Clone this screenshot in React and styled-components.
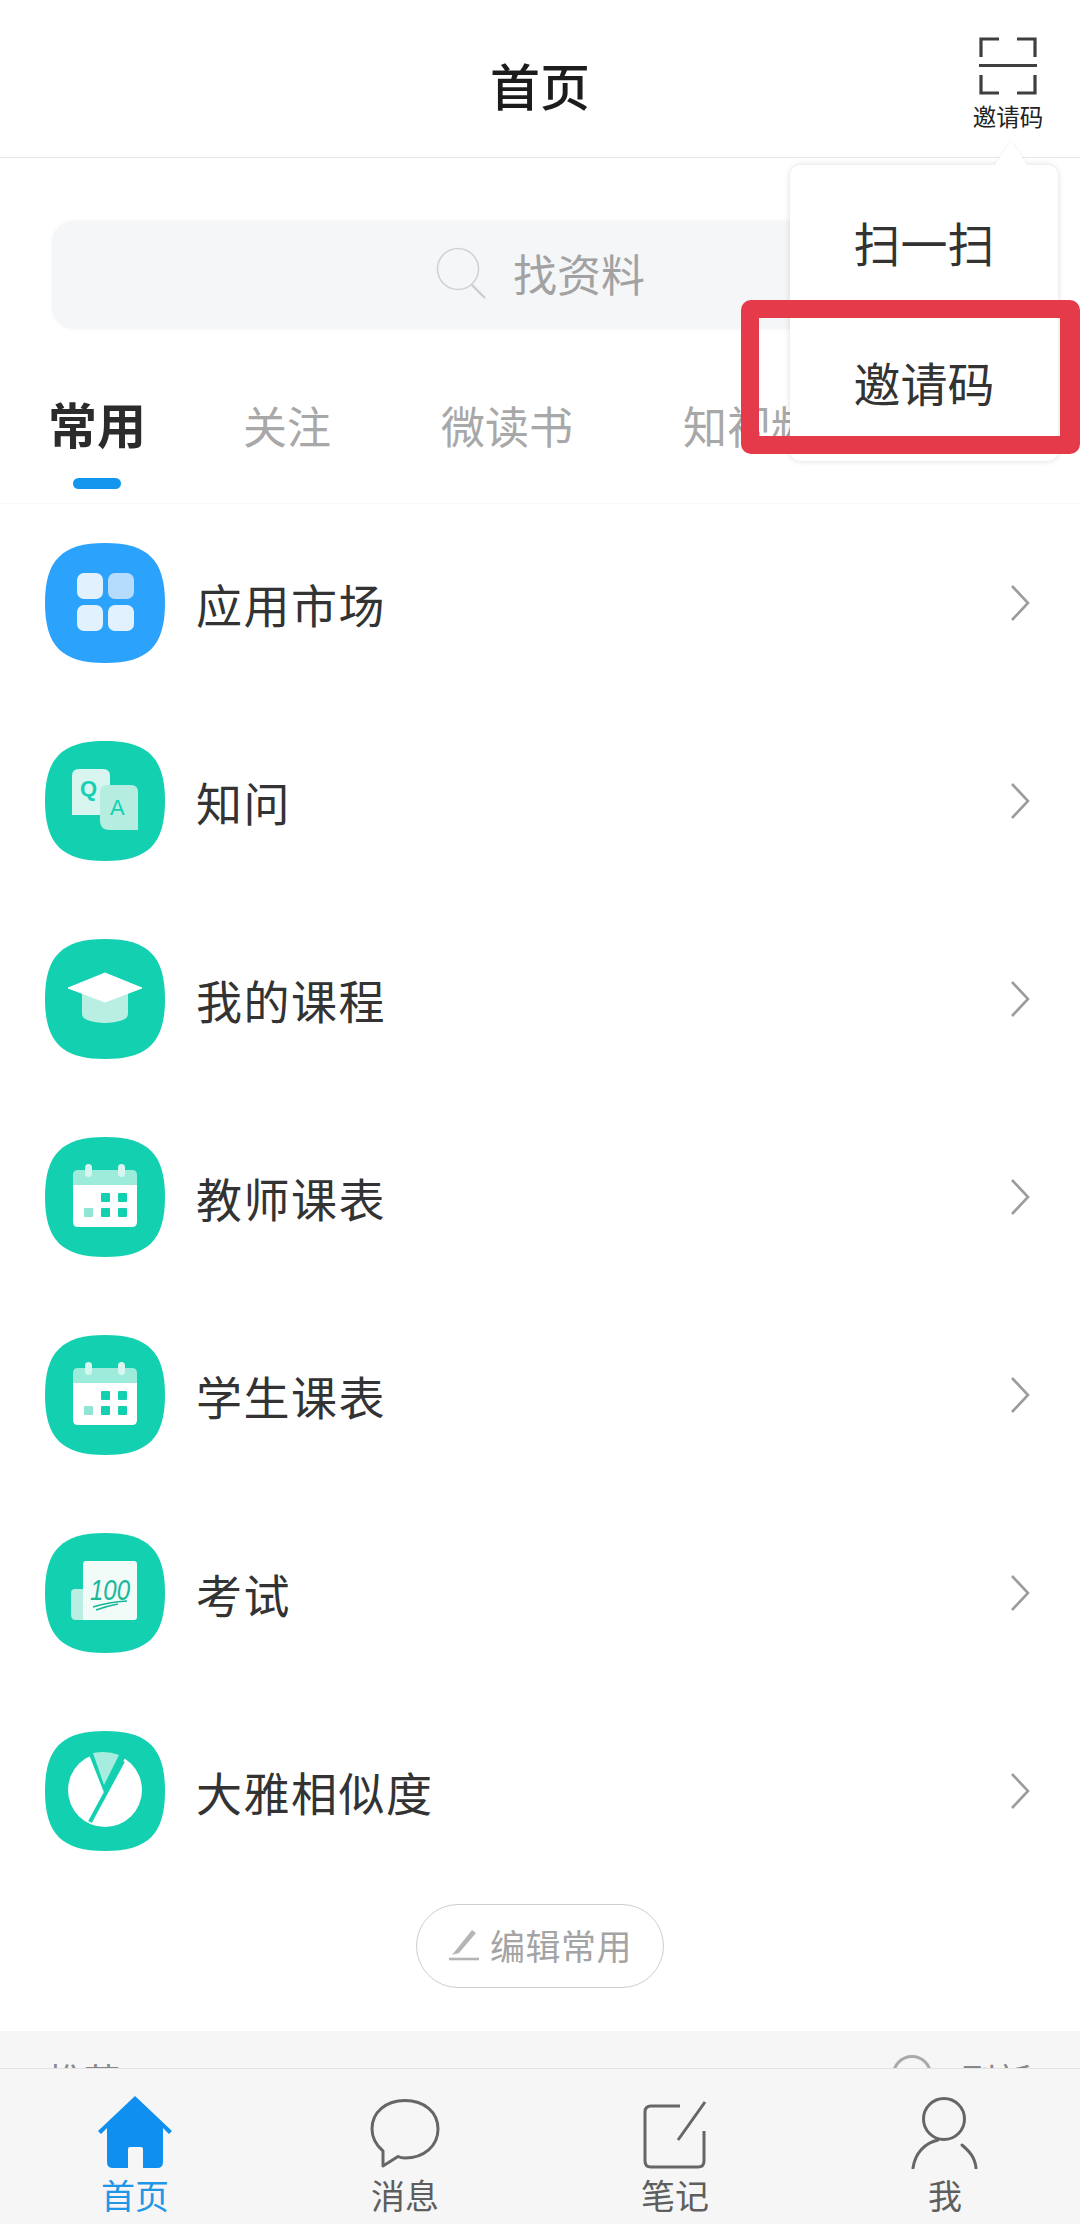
import React from "react";
import styled, { createGlobalStyle } from "styled-components";

const FONT = `"Noto Sans CJK SC", "Noto Sans", sans-serif`;
const TEAL = "#13d0b0";
const MINT = "#b9efe3";

const Global = createGlobalStyle`
  html, body { margin: 0; padding: 0; background: #fff; }
  * { box-sizing: border-box; }
  #root { width: 1080px; height: 2224px; }
`;

const Page = styled.div`
  position: relative;
  width: 1080px;
  height: 2224px;
  display: flex;
  flex-direction: column;
  overflow: hidden;
  background: #fff;
  font-family: ${FONT};
  color: #333;
`;
const Content = styled.main`
  flex: 1;
  min-height: 0;
  overflow: hidden;
  display: flex;
  flex-direction: column;
  background: #fff;
`;
const Header = styled.header`
  height: 158px;
  flex: none;
  display: grid;
  grid-template-columns: 1fr auto 1fr;
  align-items: start;
  padding: 0 37px;
  border-bottom: 1.5px solid #e6e6e6;
`;
const Title = styled.h1`
  grid-column: 2;
  margin: 50px 0 0;
  font-size: 50px;
  line-height: 68px;
  font-weight: 500;
  color: #1c1c1c;
`;
const Invite = styled.div`
  grid-column: 3;
  justify-self: end;
  width: 70px;
  padding-top: 37px;
  display: flex;
  flex-direction: column;
  align-items: center;
`;
const InviteLabel = styled.span`
  margin-top: 6px;
  font-size: 23.5px;
  line-height: 30px;
  white-space: nowrap;
  color: #222;
`;
const SearchBar = styled.div`
  flex: none;
  height: 108px;
  margin: 63px 52px 0;
  padding-bottom: 4px;
  border-radius: 22px;
  background: #f5f6f8;
  box-shadow: 0 0 5px #f5f6f8;
  display: flex;
  align-items: center;
  justify-content: center;
  gap: 26px;
`;
const SearchText = styled.span`
  font-size: 44px;
  line-height: 60px;
  color: #a2a2a2;
`;
const Tabs = styled.nav`
  flex: none;
  height: 111px;
  margin-top: 64px;
  padding-left: 48px;
  display: flex;
  align-items: flex-start;
  gap: 110px;
  overflow: hidden;
  border-bottom: 1px solid #fafafa;
`;
const Tab = styled.div`
  flex: none;
  display: flex;
  flex-direction: column;
  align-items: center;
  margin-top: ${(p) => (p.$active ? "-2px" : "0")};
  margin-right: ${(p) => (p.$active ? "-13px" : "0")};
  font-size: ${(p) => (p.$active ? "49px" : "44px")};
  font-weight: ${(p) => (p.$active ? 700 : 400)};
  line-height: 64px;
  color: ${(p) => (p.$active ? "#2b2b2b" : "#a8a8a8")};
  white-space: nowrap;
`;
const TabBar = styled.i`
  display: block;
  width: 48px;
  height: 11px;
  margin-top: 23px;
  border-radius: 6px;
  background: #1296ee;
`;
const List = styled.ul`
  flex: none;
  margin: 0;
  padding: 0;
  list-style: none;
`;
const Row = styled.li`
  height: 198px;
  padding: 0 50px 0 45px;
  display: flex;
  align-items: center;
  gap: 31px;
`;
const RowLabel = styled.span`
  flex: 1;
  font-size: 46px;
  line-height: 60px;
  letter-spacing: 1.5px;
  color: #333;
`;
const EditButton = styled.div`
  flex: none;
  align-self: center;
  width: 248px;
  height: 84px;
  margin-top: 14px;
  padding-bottom: 3px;
  border: 1.5px solid #cfcfcf;
  border-radius: 42px;
  display: flex;
  align-items: center;
  justify-content: center;
  gap: 10px;
  font-size: 35px;
  letter-spacing: 0.5px;
  color: #a4a4a4;
`;
const Section = styled.section`
  flex: 1;
  margin-top: 43px;
  padding: 24px 48px 0;
  background: #f6f6f6;
  display: flex;
  justify-content: space-between;
  align-items: flex-start;
  font-size: 36px;
  line-height: 48px;
  color: #888;
`;
const Refresh = styled.div`
  display: flex;
  align-items: flex-start;
  gap: 28px;
`;
const Spinner = styled.i`
  display: block;
  width: 40px;
  height: 40px;
  border: 3px solid #aaa;
  border-radius: 50%;
`;
const BottomNav = styled.footer`
  flex: none;
  height: 156px;
  display: grid;
  grid-template-columns: repeat(4, 270px);
  background: #f6f6f6;
  border-top: 1.5px solid #e4e4e4;
`;
const NavItem = styled.div`
  display: flex;
  flex-direction: column;
  align-items: center;
  padding-top: 26px;
  font-size: 34px;
  line-height: 44px;
  color: ${(p) => (p.$active ? "#1f96e6" : "#5e5e5e")};
`;
const NavIcon = styled.div`
  height: 74px;
  margin-bottom: 4px;
  display: flex;
  align-items: flex-end;
`;
const Popup = styled.div`
  position: absolute;
  left: 790px;
  top: 165px;
  width: 268px;
  height: 296px;
  padding-top: 6px;
  background: #fff;
  border-radius: 10px;
  box-shadow: 0 0 6px rgba(0, 0, 0, 0.14);
  &::before {
    content: "";
    position: absolute;
    top: -24px;
    left: 204px;
    border-left: 17px solid transparent;
    border-right: 17px solid transparent;
    border-bottom: 25px solid #fff;
    filter: drop-shadow(0 -1px 1px rgba(0, 0, 0, 0.06));
  }
`;
const PopupItem = styled.div`
  height: 140px;
  display: flex;
  align-items: center;
  justify-content: center;
  font-size: 47px;
  color: #333;
`;
const Highlight = styled.div`
  position: absolute;
  left: 741px;
  top: 300px;
  width: 339px;
  height: 154px;
  border: 18px solid #e43a4a;
  border-right-width: 20px;
  border-radius: 10px;
`;

const Squircle = ({ fill }) => (
  <path d="M60 0C103 0 120 17 120 60C120 103 103 120 60 120C17 120 0 103 0 60C0 17 17 0 60 0Z" fill={fill} />
);
const AppIcon = ({ fill = TEAL, children }) => (
  <svg width="120" height="120" viewBox="0 0 120 120" style={{ flex: "none" }}>
    <Squircle fill={fill} />
    {children}
  </svg>
);
const GridGlyph = () => (
  <>
    <rect x="32" y="30" width="26" height="26" rx="7" fill="#e2f1fe" />
    <rect x="63" y="30" width="26" height="26" rx="7" fill="#b5dcfd" />
    <rect x="32" y="62" width="26" height="26" rx="7" fill="#e2f1fe" />
    <rect x="63" y="62" width="26" height="26" rx="7" fill="#e2f1fe" />
  </>
);
const QaGlyph = () => (
  <>
    <path d="M34 28H58Q65 28 65 35V74H27V35Q27 28 34 28Z" fill="#d8f6ef" />
    <path d="M62 44H86Q93 44 93 51V89H65Q55 89 55 80V51Q55 44 62 44Z" fill="#b5ede0" />
    <text x="35" y="55" fontFamily="Liberation Sans, sans-serif" fontWeight="700" fontSize="22" fill={TEAL}>Q</text>
    <text x="65" y="74" fontFamily="Liberation Sans, sans-serif" fontSize="22" fill={TEAL}>A</text>
  </>
);
const CapGlyph = () => (
  <>
    <path d="M37 52H83V75Q83 83 60 84Q37 83 37 75Z" fill={MINT} />
    <path d="M60 34L97 49L60 63L23 49Z" fill="#fff" strokeLinejoin="round" stroke="#fff" strokeWidth="1" />
  </>
);
const CalendarGlyph = () => (
  <>
    <path d="M33 33H87Q92 33 92 38V48H28V38Q28 33 33 33Z" fill="#9debdb" />
    <path d="M28 48H92V85Q92 90 87 90H33Q28 90 28 85Z" fill="#fff" />
    <rect x="40" y="27" width="7" height="13" rx="3.5" fill="#d6f6ef" />
    <rect x="73" y="27" width="7" height="13" rx="3.5" fill="#d6f6ef" />
    <rect x="56" y="56" width="9" height="9" rx="1" fill={TEAL} />
    <rect x="73" y="56" width="9" height="9" rx="1" fill={TEAL} />
    <rect x="39" y="71" width="9" height="9" rx="1" fill="#8fe6d4" />
    <rect x="56" y="71" width="9" height="9" rx="1" fill={TEAL} />
    <rect x="73" y="71" width="9" height="9" rx="1" fill={TEAL} />
  </>
);
const ExamGlyph = () => (
  <>
    <path d="M30 56H42V87H31Q26 87 26 82V60Q26 56 30 56Z" fill={MINT} />
    <path d="M41 28H89Q92 28 92 31V84Q92 87 89 87H38V31Q38 28 41 28Z" fill="#f1fcf9" />
    <text x="45" y="67" textLength="40" lengthAdjust="spacingAndGlyphs" fontFamily="Liberation Sans, sans-serif" fontStyle="italic" fontSize="30" fill="#18b79a">100</text>
    <path d="M48 74Q64 69 82 68M51 77Q62 73 73 71" stroke="#18b79a" strokeWidth="1.5" fill="none" />
  </>
);
const PieGlyph = () => (
  <>
    <circle cx="60" cy="59" r="37" fill="#fff" />
    <path d="M41 16H86L60 64Z" fill={TEAL} />
    <path d="M48 22Q62 19 74 24L59 54Z" fill="#a7eddf" />
    <path d="M78 30L45 91" stroke={TEAL} strokeWidth="4" fill="none" />
  </>
);
const Chevron = () => (
  <svg width="20" height="38" viewBox="0 0 20 38" style={{ flex: "none" }}>
    <path d="M2 2L18 19L2 36" fill="none" stroke="#9c9c9c" strokeWidth="2.6" />
  </svg>
);
const ScanIcon = () => (
  <svg width="58" height="58" viewBox="0 0 58 58">
    <path d="M20 2H2V20M38 2H56V20M2 38V56H20M56 38V56H38" fill="none" stroke="#3f3f3f" strokeWidth="3.2" />
    <path d="M0 28.5H58" stroke="#3f3f3f" strokeWidth="3.2" />
  </svg>
);
const SearchIcon = () => (
  <svg width="52" height="52" viewBox="0 0 52 52">
    <circle cx="23" cy="22" r="20.5" fill="none" stroke="#d2d2d2" strokeWidth="1.6" />
    <path d="M37 38L50 51" stroke="#cdcdcd" strokeWidth="2.4" />
  </svg>
);
const PencilIcon = () => (
  <svg width="32" height="32" viewBox="0 0 32 32">
    <path d="M24 1L28 4L11 24L4 26Z" fill="#b5b5b5" />
    <path d="M1 30H31" stroke="#b5b5b5" strokeWidth="2.6" />
  </svg>
);
const HomeIcon = () => (
  <svg width="74" height="73" viewBox="0 0 74 73">
    <path
      d="M37 0L74 35L71 38L65 32V66Q65 72 59 72H45V53Q45 51 43 51H32Q30 51 30 53V72H15Q9 72 9 66V32L3 38L0 35Z"
      fill="#0f8ff0"
    />
  </svg>
);
const MessageIcon = () => (
  <svg width="70" height="70" viewBox="0 0 70 70">
    <path
      d="M13 52C6 46 2 38 2 30C2 13 16 1.5 35 1.5C54 1.5 68 13 68 30C68 47 54 59 35 59C32 59 30 58.5 28 57.5L13 67Z"
      fill="none"
      stroke="#666"
      strokeWidth="3"
      strokeLinejoin="round"
    />
  </svg>
);
const NoteIcon = () => (
  <svg width="64" height="68" viewBox="0 0 64 68">
    <path d="M37 5H8Q2 5 2 11V60Q2 66 8 66H55Q61 66 61 60V30" fill="none" stroke="#666" strokeWidth="3" />
    <path d="M62 1L35 39" stroke="#666" strokeWidth="3" />
  </svg>
);
const PersonIcon = () => (
  <svg width="68" height="72" viewBox="0 0 68 72">
    <circle cx="33" cy="22" r="20.5" fill="none" stroke="#666" strokeWidth="3" />
    <path d="M2 71C4 56 14 46 27 43M51 48C58 54 64 60 65 71" fill="none" stroke="#666" strokeWidth="3" strokeLinecap="round" />
  </svg>
);

const rows = [
  { label: "应用市场", fill: "#2ba2fb", glyph: <GridGlyph /> },
  { label: "知问", glyph: <QaGlyph /> },
  { label: "我的课程", glyph: <CapGlyph /> },
  { label: "教师课表", glyph: <CalendarGlyph /> },
  { label: "学生课表", glyph: <CalendarGlyph /> },
  { label: "考试", glyph: <ExamGlyph /> },
  { label: "大雅相似度", glyph: <PieGlyph /> },
];
const tabs = ["常用", "关注", "微读书", "知视频", "小组"];
const nav = [
  { label: "首页", icon: <HomeIcon />, active: true },
  { label: "消息", icon: <MessageIcon /> },
  { label: "笔记", icon: <NoteIcon /> },
  { label: "我", icon: <PersonIcon /> },
];

export default function App() {
  return (
    <Page>
      <Global />
      <Content>
        <Header>
          <Title>首页</Title>
          <Invite>
            <ScanIcon />
            <InviteLabel>邀请码</InviteLabel>
          </Invite>
        </Header>
        <SearchBar>
          <SearchIcon />
          <SearchText>找资料</SearchText>
        </SearchBar>
        <Tabs>
          {tabs.map((t, i) => (
            <Tab key={t} $active={i === 0}>
              {t}
              {i === 0 && <TabBar />}
            </Tab>
          ))}
        </Tabs>
        <List>
          {rows.map((r) => (
            <Row key={r.label}>
              <AppIcon fill={r.fill}>{r.glyph}</AppIcon>
              <RowLabel>{r.label}</RowLabel>
              <Chevron />
            </Row>
          ))}
        </List>
        <EditButton>
          <PencilIcon />
          编辑常用
        </EditButton>
        <Section>
          <span>推荐</span>
          <Refresh>
            <Spinner />
            <span>刷新</span>
          </Refresh>
        </Section>
      </Content>
      <BottomNav>
        {nav.map((n) => (
          <NavItem key={n.label} $active={n.active}>
            <NavIcon>{n.icon}</NavIcon>
            {n.label}
          </NavItem>
        ))}
      </BottomNav>
      <Popup>
        <PopupItem>扫一扫</PopupItem>
        <PopupItem>邀请码</PopupItem>
      </Popup>
      <Highlight />
    </Page>
  );
}
